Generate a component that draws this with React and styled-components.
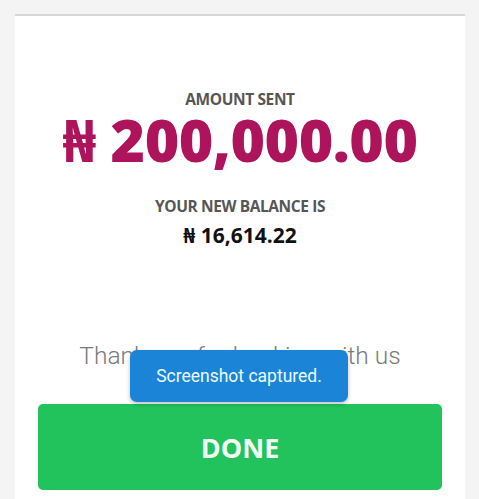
import React from "react";
import styled, {createGlobalStyle} from "styled-components";

const GlobalStyle = createGlobalStyle`
  html, body {
    margin: 0;
    padding: 0;
    background: #f4f4f4;
  }
  #root {
    height: 499px;
    overflow: hidden;
  }
`;

const Page = styled.div`
  height: 499px;
  padding: 14px 14px 0 15px;
  box-sizing: border-box;
  display: flex;
`;

const Card = styled.div`
  flex: 1;
  background: #ffffff;
  border-top: 2px solid #d6d6d6;
  display: flex;
  flex-direction: column;
  align-items: center;
  position: relative;
  font-family: "Open Sans", "Noto Sans", sans-serif;
`;

const Label = styled.div`
  margin-top: ${props => props.top}px;
  font-size: 15.5px;
  font-weight: 700;
  color: #565656;
  letter-spacing: -0.4px;
  line-height: 20px;
`;

const Amount = styled.div`
  margin-top: 0;
  font-size: 59px;
  font-weight: 800;
  color: #ad145c;
  line-height: 60px;
  letter-spacing: -0.5px;
`;

const Balance = styled.div`
  margin-top: 6px;
  font-size: 21px;
  font-weight: 700;
  color: #111;
  line-height: 26px;
`;

const Thanks = styled.div`
  margin-top: 93px;
  font-family: Roboto, "Liberation Sans", sans-serif;
  font-weight: 300;
  font-size: 24.5px;
  color: #7a7a7a;
  line-height: 30px;
`;

const DoneButton = styled.button`
  margin-top: 33px;
  width: 404px;
  height: 86px;
  border: none;
  border-radius: 5px;
  background: #22c35d;
  color: #f4fff8;
  font-family: "Open Sans", "Noto Sans", sans-serif;
  font-weight: 700;
  font-size: 27px;
`;

const Toast = styled.div`
  position: absolute;
  left: 115px;
  top: 334px;
  width: 218px;
  height: 52px;
  border-radius: 7px;
  background: #1b84d6;
  color: #eafcff;
  font-family: Roboto, "Liberation Sans", sans-serif;
  font-size: 17.5px;
  display: flex;
  align-items: center;
  justify-content: center;
  box-shadow: 0 2px 4px rgba(0, 0, 0, 0.25);
`;

const App = () => {
  return (
    <>
      <GlobalStyle/>
      <Page>
        <Card>
          <Label top={73}>AMOUNT SENT</Label>
          <Amount>₦ 200,000.00</Amount>
          <Label top={27}>YOUR NEW BALANCE IS</Label>
          <Balance>₦ 16,614.22</Balance>
          <Thanks>Thank you for banking with us</Thanks>
          <DoneButton>DONE</DoneButton>
          <Toast>Screenshot captured.</Toast>
        </Card>
      </Page>
    </>
  );
};

export default App;
